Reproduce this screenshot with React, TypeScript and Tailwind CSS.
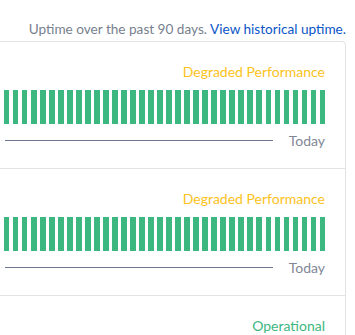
const BAR_COUNT = 90;

function UptimeBars() {
  return (
    <div className="mt-2 flex h-[34px] justify-end gap-[3.61px] overflow-hidden">
      {Array.from({ length: BAR_COUNT }).map((_, i) => (
        <div key={i} className="h-full w-[5.41px] shrink-0 bg-[#3cb77f]" />
      ))}
    </div>
  );
}

function ComponentRow({
  status,
  color,
  last,
}: {
  status: string;
  color: string;
  last?: boolean;
}) {
  return (
    <div className={`pl-0 pr-5 pt-5 pb-[18px] ${last ? "" : "border-b border-[#e3e3e3]"}`}>
      <div className={`text-right text-[14px] leading-5 ${color}`}>{status}</div>
      <UptimeBars />
      <div className="mt-[6px] flex h-5 items-center text-[14px] text-[#7f8796]">
        <div className="ml-[14px] mr-4 h-px flex-1 bg-[#6b778c]" />
        <span>Today</span>
      </div>
    </div>
  );
}

export default function App() {
  return (
    <div
      className="h-[335px] w-[355px] overflow-hidden bg-white"
      style={{ fontFamily: "Lato, 'Open Sans', sans-serif" }}
    >
      <div className="pr-[9px] pt-[19px]">
        <p className="text-right text-[13.6px] leading-5 text-[#777f8e]">
          Uptime over the past 90 days.{" "}
          <a className="text-[#0b55c8]">View historical uptime.</a>
        </p>
        <div className="ml-[-10px] mt-[2px] rounded-[4px] border border-[#e3e3e3]">
          <ComponentRow status="Degraded Performance" color="text-[#fcc21b]" />
          <ComponentRow status="Degraded Performance" color="text-[#fcc21b]" />
          <ComponentRow status="Operational" color="text-[#3cb77f]" last />
        </div>
      </div>
    </div>
  );
}
